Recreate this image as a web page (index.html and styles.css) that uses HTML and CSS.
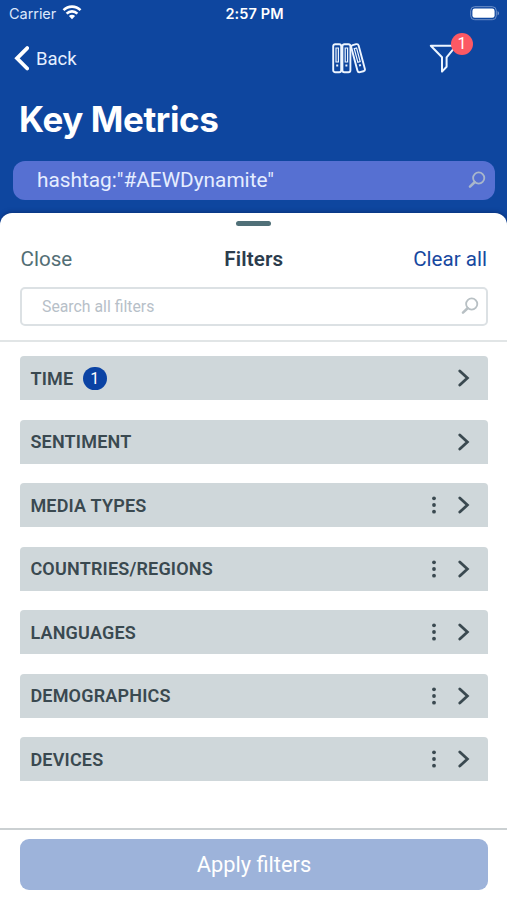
FILE: index.html
```html
<!DOCTYPE html>
<html lang="en">
<head>
<meta charset="utf-8">
<title>Key Metrics</title>
<link rel="stylesheet" href="styles.css">
</head>
<body>
<svg class="defs" width="0" height="0">
  <symbol id="search" viewBox="0 0 18 18"><circle cx="10.7" cy="7" r="5.6" fill="none" stroke="currentColor" stroke-width="1.8"/><path d="M6.6 11.2 2 15.6" fill="none" stroke="currentColor" stroke-width="2.6" stroke-linecap="round"/></symbol>
  <symbol id="chevron" viewBox="0 0 12 18"><path d="m1.8 1.9 7.6 7.1-7.6 7.1" fill="none" stroke="currentColor" stroke-width="2.8" stroke-linecap="round" stroke-linejoin="miter"/></symbol>
  <symbol id="dots" viewBox="0 0 4 18"><circle cx="2" cy="2.300" r="1.9"/><circle cx="2" cy="9" r="1.9"/><circle cx="2" cy="15.700" r="1.9"/></symbol>
</svg>
<div class="screen">
  <header class="top">
    <div class="status">
      <div class="carrier"><span class="carrier-name">Carrier</span>
        <svg width="20" height="15" viewBox="0 0 20 15" fill="none" stroke="#fff" stroke-width="2.6"><path d="M1.5 5.2C6.3.4 13.7.4 18.5 5.2"/><path d="M4.6 8.6c3.1-3 7.7-3 10.8 0"/><path d="M6.9 11c1.8-1.7 4.4-1.7 6.2 0L10 14.2z" fill="#fff" stroke="none"/></svg>
      </div>
      <div class="clock">2:57 PM</div>
      <svg class="battery" width="31" height="15" viewBox="0 0 31 15"><rect x="1.7" y=".7" width="25.6" height="13" rx="4" fill="none" stroke="#6f90c8" stroke-width="1"/><rect x="3.4" y="2.6" width="22.2" height="9.2" rx="2.3" fill="#fff"/><path d="M28.6 5v4.5c1.8-.8 1.8-3.7 0-4.5z" fill="#839fd0"/></svg>
    </div>
    <nav class="nav">
      <div class="back"><svg width="16" height="26" viewBox="0 0 16 26"><path d="M14.200 3.100 4 13.300l10.200 10.200" fill="none" stroke="#fff" stroke-width="3.800" stroke-linecap="round"/></svg><span>Back</span></div>
      <svg class="books" width="35" height="31" viewBox="0 0 35 31" fill="none" stroke="#edf5ff" stroke-width="1.900">
        <rect x="1.200" y="1.200" width="8" height="28" rx="2"/><rect x="10.400" y="1.200" width="8" height="28" rx="2"/>
        <path d="M4 5v14h2.400V5zM13.200 5v14h2.400V5z" stroke-width="1.200"/><path d="M4.200 22.500h2M13.400 22.500h2" stroke-width="2"/>
        <g transform="rotate(-15 26 15)"><rect x="22.200" y="1.200" width="7.600" height="28" rx="2"/><path d="M24.800 5v14h2.400V5z" stroke-width="1.200"/><path d="M25 22.500h2" stroke-width="2"/></g>
      </svg>
      <div class="funnel"><svg width="28" height="30" viewBox="0 0 28 30"><path d="M1.800 1.800h25.200l-9.400 11.500v9.400l-4.600 4.900V13.300z" fill="none" stroke="#edf5ff" stroke-width="2" stroke-linejoin="round"/></svg><span class="alert">1</span></div>
    </nav>
    <h1 class="title"><span>Key Metrics</span></h1>
    <div class="query"><span>hashtag:"#AEWDynamite"</span><svg width="18" height="18"><use href="#search"/></svg></div>
  </header>
  <main class="sheet">
    <div class="handle"></div>
    <div class="sheet-head"><span class="close">Close</span><strong class="sheet-title">Filters</strong><span class="clear">Clear all</span></div>
    <div class="search"><span>Search all filters</span><svg width="18" height="18"><use href="#search"/></svg></div>
    <div class="list">
      <div class="row"><span class="label">TIME</span><span class="count">1</span><svg class="chev" width="12" height="18"><use href="#chevron"/></svg></div>
      <div class="row"><span class="label">SENTIMENT</span><svg class="chev" width="12" height="18"><use href="#chevron"/></svg></div>
      <div class="row"><span class="label">MEDIA TYPES</span><svg class="more" width="4" height="18"><use href="#dots"/></svg><svg class="chev" width="12" height="18"><use href="#chevron"/></svg></div>
      <div class="row"><span class="label">COUNTRIES/REGIONS</span><svg class="more" width="4" height="18"><use href="#dots"/></svg><svg class="chev" width="12" height="18"><use href="#chevron"/></svg></div>
      <div class="row"><span class="label">LANGUAGES</span><svg class="more" width="4" height="18"><use href="#dots"/></svg><svg class="chev" width="12" height="18"><use href="#chevron"/></svg></div>
      <div class="row"><span class="label">DEMOGRAPHICS</span><svg class="more" width="4" height="18"><use href="#dots"/></svg><svg class="chev" width="12" height="18"><use href="#chevron"/></svg></div>
      <div class="row"><span class="label">DEVICES</span><svg class="more" width="4" height="18"><use href="#dots"/></svg><svg class="chev" width="12" height="18"><use href="#chevron"/></svg></div>
    </div>
    <footer class="foot"><div class="apply">Apply filters</div></footer>
  </main>
</div>
</body>
</html>
```
FILE: styles.css
```css
* { box-sizing: border-box; }
body { margin: 0; font-family: Roboto, sans-serif; background: #0e469f; }
svg { display: block; flex: none; }
.defs { position: absolute; }
.screen { width: 507px; height: 900px; display: flex; flex-direction: column; overflow: hidden; background: #0e469f; }
.top { height: 213px; flex: none; color: #fff; }
.status { height: 28px; padding: 0 7px 2px 9px; display: grid; grid-template-columns: 1fr auto 1fr; align-items: center; font-family: Inter, sans-serif; }
.carrier { display: flex; align-items: center; gap: 6px; font-size: 14.5px; color: #dce8fb; letter-spacing: -.05px; }
.carrier svg { margin-top: -1px; }
.clock { font-size: 14.5px; font-weight: 600; letter-spacing: .1px; }
.battery { justify-self: end; margin-top: 1px; }
.nav { height: 60px; display: flex; align-items: center; padding-left: 13px; }
.back { display: flex; align-items: center; gap: 7px; width: 319px; font-size: 18.5px; color: #e6f0ff; }
.back span { padding-top: 1px; }
.funnel { position: relative; margin-left: 62px; }
.funnel svg { margin-top: 1px; }
.alert { position: absolute; left: 22px; top: -10px; width: 22px; height: 22px; border-radius: 50%; background: #fc5964; color: #fff; font-size: 16px; line-height: 21px; text-align: center; }
.title { margin: 0; height: 73px; padding: 0 19px 11px; display: flex; align-items: center; font-family: Inter, sans-serif; font-size: 35px; line-height: 42px; font-weight: 700; letter-spacing: -.4px; }
.query { margin: 0 12px 0 13px; height: 39px; border-radius: 12px; background: #5670d2; display: flex; align-items: center; justify-content: space-between; padding: 0 9px 1px 24px; font-size: 20.8px; color: #e5edff; }
.query svg { color: #a9b7cb; }
.sheet { flex: 1; background: #fff; border-radius: 12px 12px 0 0; display: flex; flex-direction: column; box-shadow: 0 -1px 4px #0a327a; }
.handle { width: 35px; height: 5px; border-radius: 3px; background: #507078; margin: 8px auto 0; }
.sheet-head { height: 61px; padding: 4px 20px 0 20.5px; display: grid; grid-template-columns: 1fr auto 1fr; align-items: center; font-size: 20.6px; }
.close { color: #536e75; }
.sheet-title { color: #2b3c4d; font-weight: 600; letter-spacing: .15px; }
.clear { color: #1748a0; text-align: right; }
.search { height: 39px; margin: 0 19px 0 20px; border: 2px solid #dce1e4; border-radius: 5px; padding: 0 7px 1px 20px; display: flex; align-items: center; justify-content: space-between; font-size: 15.8px; color: #b7c0c8; }
.search svg { color: #b8c0c4; }
.list { flex: 1; margin-top: 14px; border-top: 2px solid #e1e5e6; padding: 14.4px 19.5px 0 20.4px; display: flex; flex-direction: column; gap: 19.5px; }
.row { height: 44px; flex: none; background: #cfd7da; border-radius: 4px 4px 0 0; display: flex; align-items: center; padding: 0 18px 0 10px; color: #3a4950; fill: #3a4950; }
.label { font-size: 18px; font-weight: 600; letter-spacing: .19px; }
.count { width: 24px; height: 23px; border-radius: 12px; margin-left: 9.5px; background: #0b43a4; color: #fff; font-size: 16px; line-height: 23px; text-align: center; }
.chev { margin-left: auto; }
.more { margin-left: auto; }
.more + .chev { margin-left: 22px; }
.foot { height: 72px; flex: none; border-top: 2px solid #cbd0d2; padding: 9px 19.5px 0 20.4px; }
.apply { height: 51px; border-radius: 9px; background: #9db3da; color: #fff; text-align: center; font-size: 21.8px; line-height: 51px; }
```
